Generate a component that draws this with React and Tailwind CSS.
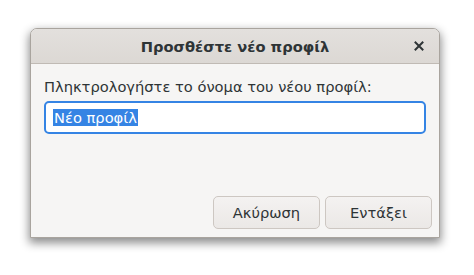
export default function App() {
  return (
    <div className="w-[474px] h-[275px] bg-white pt-[28px] pl-[30px]" style={{ fontFamily: '"DejaVu Sans", sans-serif' }}>
      <div className="w-[410px] h-[210px] flex flex-col rounded-t-[7px] border border-[#a9a49e] bg-[#f6f5f4] shadow-[0_4px_10px_1px_rgba(0,0,0,0.45)]">
        <div className="h-[35px] flex items-center relative rounded-t-[6px] border-b border-[#c0bab4] bg-gradient-to-b from-[#e3e0dd] to-[#dcd8d4]">
          <div className="w-full text-center text-[14.67px] font-bold text-[#2e3436] pt-px">Προσθέστε νέο προφίλ</div>
          <div className="absolute right-[12px] top-[9px] w-[16px] h-[16px] flex items-center justify-center">
            <svg width="10" height="10" viewBox="0 0 10 10">
              <path d="M1.5 1.5 L8.5 8.5 M8.5 1.5 L1.5 8.5" stroke="#2e3436" strokeWidth="2" strokeLinecap="square" />
            </svg>
          </div>
        </div>
        <div className="flex-1 flex flex-col px-[13px] pt-[13px] pb-[8px]">
          <div className="text-[14.67px] text-[#2e3436] leading-[19px]">Πληκτρολογήστε το όνομα του νέου προφίλ:</div>
          <div className="mt-[5px] h-[33px] rounded-[5px] border-2 border-[#3584e4] bg-white flex items-center px-[7px]">
            <span className="bg-[#3584e4] text-white text-[14.67px] leading-[17px] px-px">Νέο προφίλ</span>
          </div>
          <div className="flex-1" />
          <div className="flex justify-end gap-[5px] mr-[-6px]">
            <button className="w-[107px] h-[33px] rounded-[5px] border border-[#cdc7c2] bg-gradient-to-b from-[#f4f2f1] to-[#ebe8e6] text-[14.67px] text-[#2e3436]">Ακύρωση</button>
            <button className="w-[107px] h-[33px] rounded-[5px] border border-[#cdc7c2] bg-gradient-to-b from-[#f4f2f1] to-[#ebe8e6] text-[14.67px] text-[#2e3436]">Εντάξει</button>
          </div>
        </div>
      </div>
    </div>
  );
}
